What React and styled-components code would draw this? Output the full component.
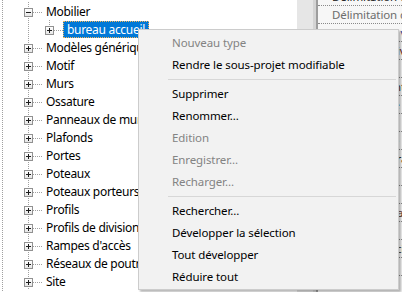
import React from "react"
import styled, { createGlobalStyle } from "styled-components"

const GlobalStyle = createGlobalStyle`
  html, body {
    margin: 0;
    padding: 0;
  }
  body {
    width: 402px;
    height: 292px;
    overflow: hidden;
    background: #ffffff;
    font-family: "Noto Sans", "Segoe UI", sans-serif;
    font-size: 11.5px;
    letter-spacing: -0.1px;
    color: #000000;
  }
`

const dots = `
  background-image: linear-gradient(to bottom, #a0a0a0 50%, transparent 50%);
  background-size: 1px 2px;
`

const Screen = styled.div`
  position: relative;
  display: flex;
  width: 402px;
  height: 292px;
  overflow: hidden;
`

const TreePane = styled.div`
  position: relative;
  width: 297px;
  flex: none;
  padding-top: 2px;
  background: #ffffff;
  &::before {
    content: "";
    position: absolute;
    left: 2px;
    top: 0;
    bottom: 0;
    width: 1px;
    ${dots}
  }
`

const Row = styled.div`
  display: flex;
  align-items: center;
  height: 18px;
  padding-left: 18px;
  white-space: nowrap;
`

const Guide = styled.span`
  position: relative;
  align-self: stretch;
  width: 21px;
  flex: none;
  &::before {
    content: "";
    position: absolute;
    left: 10px;
    top: 0;
    bottom: 0;
    width: 1px;
    ${dots}
  }
`

const Knot = styled.span`
  position: relative;
  align-self: stretch;
  width: 24px;
  flex: none;
  &::before {
    content: "";
    position: absolute;
    left: 10px;
    top: 0;
    height: ${p => (p.$last ? "10px" : "100%")};
    width: 1px;
    ${dots}
  }
  &::after {
    content: "";
    position: absolute;
    left: 15px;
    top: 10px;
    width: 9px;
    height: 1px;
    background-image: linear-gradient(to right, #a0a0a0 50%, transparent 50%);
    background-size: 2px 1px;
  }
`

const Box = styled.span`
  position: absolute;
  left: 6px;
  top: 6px;
  width: 7px;
  height: 7px;
  border: 1px solid #919191;
  background: linear-gradient(#ffffff, #e6e6e6);
  z-index: 1;
  &::before {
    content: "";
    position: absolute;
    left: 1px;
    top: 3px;
    width: 5px;
    height: 1px;
    background: #1c1c1c;
  }
  &::after {
    content: "";
    display: ${p => (p.$open ? "none" : "block")};
    position: absolute;
    left: 3px;
    top: 1px;
    width: 1px;
    height: 5px;
    background: #1c1c1c;
  }
`

const Label = styled.span`
  height: 15px;
  line-height: 15px;
  padding: 0 3px;
  border: 1px dotted ${p => (p.$selected ? "#f5b65a" : "transparent")};
  background: ${p => (p.$selected ? "#0078d7" : "transparent")};
  color: ${p => (p.$selected ? "#ffffff" : "#000000")};
  font-size: 12px;
  letter-spacing: -0.3px;
`

const Gutter = styled.div`
  width: 16px;
  flex: none;
  background: #e6e6e6;
  border-right: 3px solid #d4d4d4;
`

const PropPane = styled.div`
  flex: 1;
  border-left: 2px solid #9d9d9d;
  background: #f7f7f7;
  overflow: hidden;
`

const PropRows = styled.div`
  margin-top: -12px;
`

const PropRow = styled.div`
  height: 17px;
  line-height: 17px;
  padding-left: 14px;
  white-space: nowrap;
  border-bottom: 1px dotted #8a8a8a;
  color: ${p => p.$color || "#6d6d6d"};
`

const Menu = styled.div`
  position: absolute;
  left: 138px;
  top: 29px;
  width: 259px;
  padding: 2px 0 1px;
  background: #f2f2f2;
  border: 1px solid #cccccc;
  box-shadow: 2px 2px 2px rgba(0, 0, 0, 0.28);
`

const Item = styled.div`
  height: 22px;
  line-height: 22px;
  padding-left: 33px;
  white-space: nowrap;
  color: ${p => (p.$disabled ? "#838383" : "#000000")};
`

const Separator = styled.div`
  height: 7px;
  display: flex;
  align-items: center;
  padding-left: 29px;
  padding-right: 2px;
  &::before {
    content: "";
    flex: 1;
    height: 1px;
    background: #d7d7d7;
  }
`

const families = [
  "Modèles génériques",
  "Motif",
  "Murs",
  "Ossature",
  "Panneaux de murs rideaux",
  "Plafonds",
  "Portes",
  "Poteaux",
  "Poteaux porteurs",
  "Profils",
  "Profils de division de murs",
  "Rampes d'accès",
  "Réseaux de poutres",
  "Site",
]

const properties = [
  { text: "Délimitation de la vue", color: "#1a1a1a" },
  { text: "Délimitation de la zone" },
  { text: "Echelle de la vue", color: "#1f3f8f" },
  { text: "Vue [Plan] Niveau 1", color: "#5a1e1e" },
  { text: "Discipline", color: "#202020" },
  { text: "Emplacement du", color: "#3b3b3b" },
  { text: "Epaisseur de ligne", color: "#202020" },
  { text: "Echelle", color: "#36306a" },
  { text: "Partie visible", color: "#444444" },
  { text: "Zone de cadrage", color: "#202020" },
  { text: "Etendue", color: "#3c5a8a" },
  { text: "Phase", color: "#202020" },
  { text: "Filtre des phases", color: "#5b3a3a" },
  { text: "Modèle", color: "#202020" },
  { text: "Niveau associé", color: "#444444" },
  { text: "Orientation", color: "#202020" },
]

const menu = [
  { label: "Nouveau type", disabled: true },
  { label: "Rendre le sous-projet modifiable" },
  "sep",
  { label: "Supprimer" },
  { label: "Renommer..." },
  { label: "Edition", disabled: true },
  { label: "Enregistrer...", disabled: true },
  { label: "Recharger...", disabled: true },
  "sep",
  { label: "Rechercher..." },
  { label: "Développer la sélection" },
  { label: "Tout développer" },
  { label: "Réduire tout" },
]

export default function App() {
  return (
    <>
      <GlobalStyle />
      <Screen>
        <TreePane>
          <Row>
            <Knot>
              <Box $open />
            </Knot>
            <Label>Mobilier</Label>
          </Row>
          <Row>
            <Guide />
            <Knot $last>
              <Box />
            </Knot>
            <Label $selected>bureau accueil</Label>
          </Row>
          {families.map(name => (
            <Row key={name}>
              <Knot>
                <Box />
              </Knot>
              <Label>{name}</Label>
            </Row>
          ))}
        </TreePane>
        <Gutter />
        <PropPane>
          <PropRows>
            {properties.map((p, i) => (
              <PropRow key={i} $color={p.color}>
                {p.text}
              </PropRow>
            ))}
          </PropRows>
        </PropPane>

        <Menu>
          {menu.map((m, i) =>
            m === "sep" ? (
              <Separator key={i} />
            ) : (
              <Item key={i} $disabled={m.disabled}>
                {m.label}
              </Item>
            )
          )}
        </Menu>
      </Screen>
    </>
  )
}
